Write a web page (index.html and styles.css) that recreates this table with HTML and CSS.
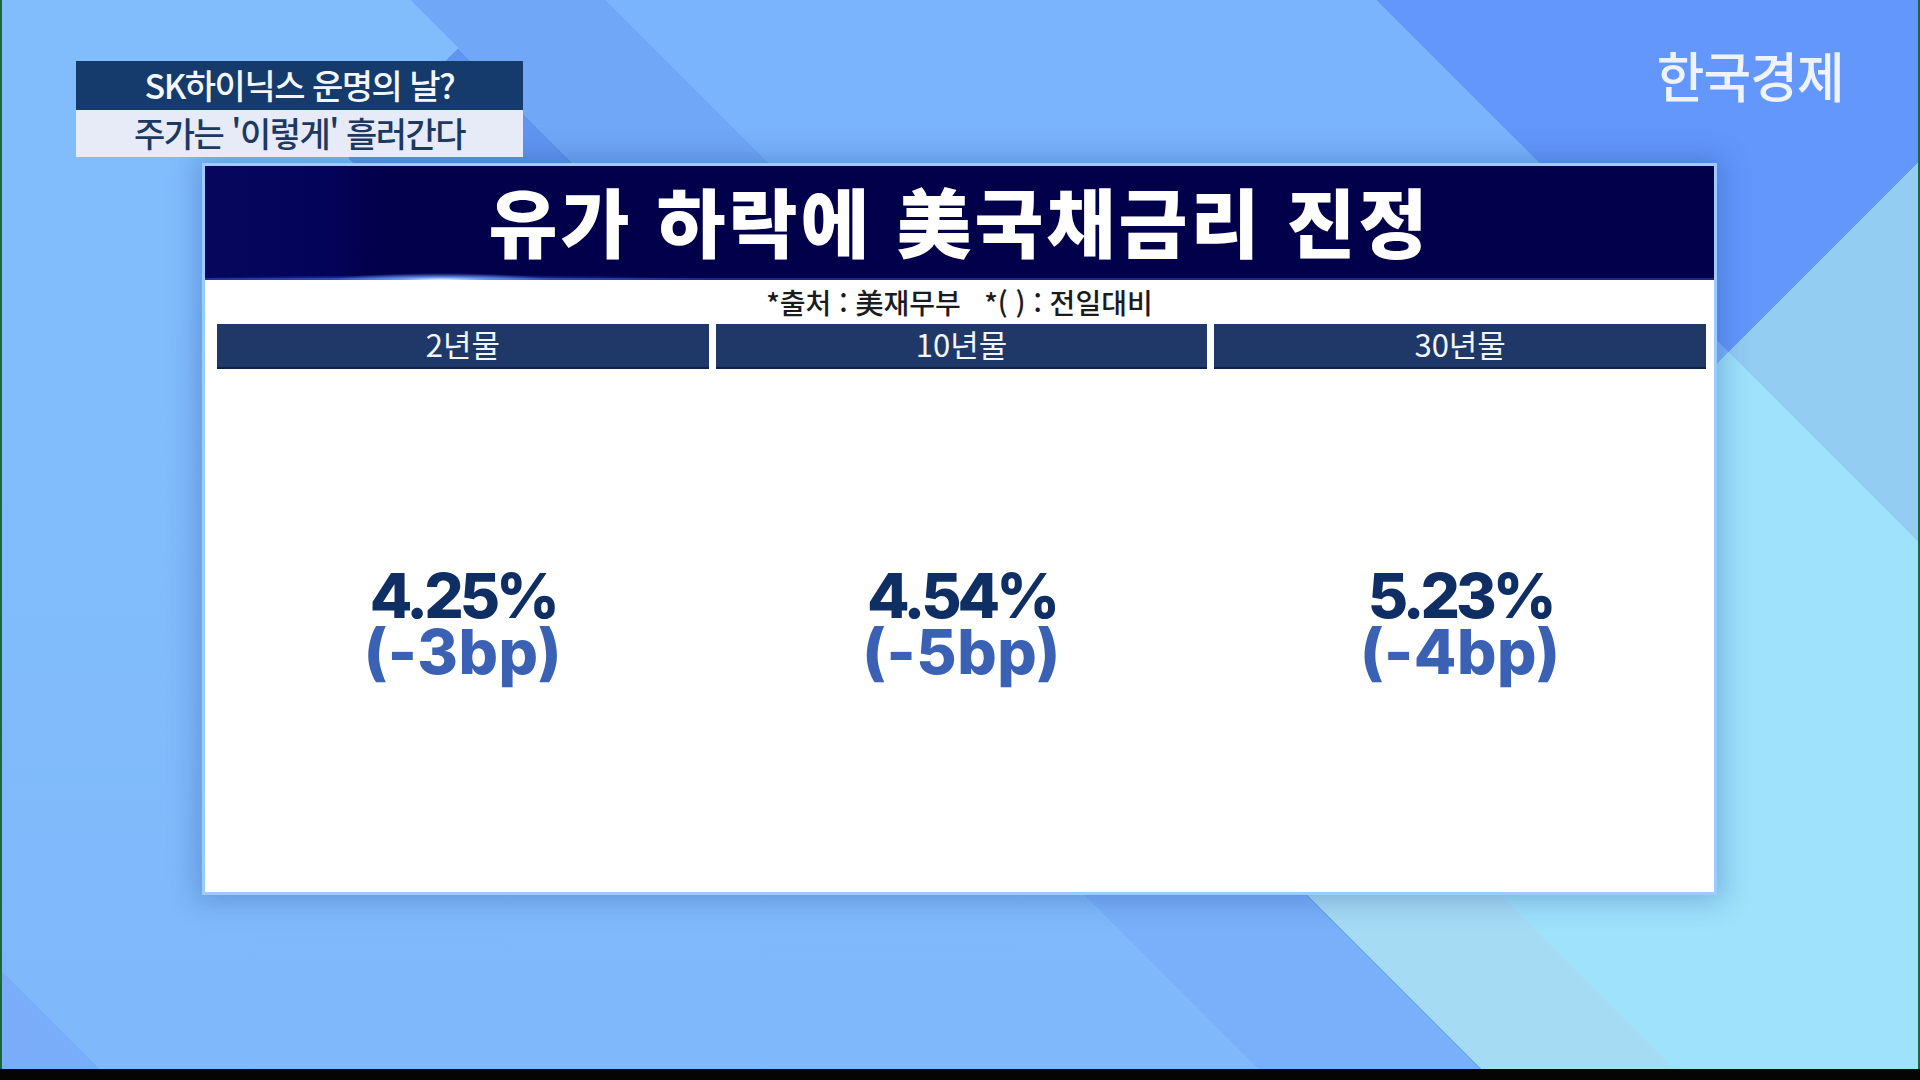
FILE: index.html
```html
<!DOCTYPE html>
<html lang="ko">
<head>
<meta charset="utf-8">
<title>유가 하락에 美국채금리 진정</title>
<link rel="stylesheet" href="styles.css">
</head>
<body>
<div class="stage">
  <div class="screen">
    <header class="top">
      <div class="caption">
        <div class="cap-line cap-dark">SK하이닉스 운명의 날?</div>
        <div class="cap-line cap-light">주가는 '이렇게' 흘러간다</div>
      </div>
      <div class="logo">한국경제</div>
    </header>
    <section class="panel">
      <h1 class="title">유가 하락에 美국채금리 진정</h1>
      <div class="source">*출처 : 美재무부   *( ) : 전일대비</div>
      <div class="cols">
        <div class="col">
          <div class="col-head">2년물</div>
          <div class="col-body">
            <div class="rate">4.25%</div>
            <div class="chg">(-3bp)</div>
          </div>
        </div>
        <div class="col">
          <div class="col-head">10년물</div>
          <div class="col-body">
            <div class="rate">4.54%</div>
            <div class="chg">(-5bp)</div>
          </div>
        </div>
        <div class="col">
          <div class="col-head">30년물</div>
          <div class="col-body">
            <div class="rate">5.23%</div>
            <div class="chg">(-4bp)</div>
          </div>
        </div>
      </div>
    </section>
  </div>
  <div class="bottom-bar"></div>
</div>
</body>
</html>
```
FILE: styles.css
```css
* { box-sizing: border-box; }

html, body {
  margin: 0;
  padding: 0;
}

body {
  width: 1920px;
  height: 1080px;
  overflow: hidden;
  font-family: "Noto Sans CJK KR", "Noto Sans", sans-serif;
}

.stage {
  width: 1920px;
  height: 1080px;
  display: flex;
  flex-direction: column;
  box-shadow: inset 2px 0 0 #1b6a36, inset -2px 0 0 #1b6a36;
  background-color: #80bcfc;
  background-image:
    linear-gradient(45deg, transparent 1056px, #a5dbf3 1056px 1192px, transparent 1192px),
    conic-gradient(from 0deg at 1728px 352px, transparent 0deg 45deg, #93cdf2 45deg 135deg, transparent 135deg),
    conic-gradient(from 0deg at 1246px 834px, transparent 0deg 45deg, #9ee2fb 45deg 135deg, transparent 135deg),
    linear-gradient(45deg, transparent 1737px, #6397fb 1737px),
    linear-gradient(45deg, transparent 1054px, #70a7f6 1054px 1192px, transparent 1192px),
    linear-gradient(45deg, #79adf9 78px, transparent 78px),
    linear-gradient(135deg, #81bdfd 358px, transparent 358px),
    linear-gradient(45deg, transparent 255px, #6095f1 255px 410px, transparent 410px),
    linear-gradient(45deg, transparent 898px, #79b0f9 898px 1054px, transparent 1054px),
    linear-gradient(45deg, transparent 1192px, #7ab4fc 1192px),
    linear-gradient(180deg, #82befd 0%, #7fb9fb 100%);
  background-size:
    100% 200px,
    100% 100%,
    100% 100%,
    100% 100%,
    100% 100%,
    100% 100%,
    100% 100%,
    100% 170px,
    100% 100%,
    100% 100%,
    100% 100%;
  background-position:
    left bottom,
    0 0, 0 0, 0 0, 0 0, 0 0, 0 0, 0 0, 0 0, 0 0, 0 0;
  background-repeat: no-repeat;
}

.screen {
  flex: 1;
  padding: 52px 76px 0 76px;
}

.bottom-bar {
  height: 11px;
  background: #050505;
}

/* top row */
.top {
  display: flex;
  justify-content: space-between;
  align-items: flex-start;
  height: 111px;
}

.caption {
  width: 447px;
  margin-top: 9px;
}

.cap-line {
  text-align: center;
  font-size: 34px;
  font-weight: 500;
  letter-spacing: -1.5px;
  white-space: nowrap;
}

.cap-dark {
  height: 49px;
  line-height: 47px;
  background: #143b6b;
  color: #f3f6fc;
}

.cap-light {
  height: 47px;
  line-height: 46px;
  background: #e7ebf7;
  color: #1c3961;
}

.logo {
  margin-top: -4px;
  font-size: 54px;
  line-height: 1;
  font-weight: 500;
  color: #eef3ff;
  letter-spacing: -1px;
  transform: scaleX(0.96);
  transform-origin: right center;
}

/* panel */
.panel {
  margin-left: 126px;
  width: 1515px;
  height: 732px;
  border: 3px solid #9ccbff;
  background: #ffffff;
  box-shadow: 0 0 26px 6px rgba(30, 70, 150, 0.3);
  display: flex;
  flex-direction: column;
}

.title {
  margin: 0;
  height: 114px;
  line-height: 108px;
  padding-bottom: 6px;
  text-align: center;
  font-size: 75px;
  font-weight: 900;
  letter-spacing: 3px;
  color: #ffffff;
  background:
    radial-gradient(ellipse 110px 7px at 236px 100%, rgba(235, 245, 255, 1), rgba(120, 170, 255, 0.75) 40%, transparent 100%),
    radial-gradient(ellipse 280px 5px at 236px 100%, rgba(70, 120, 255, 0.8), transparent 100%),
    linear-gradient(0deg, #1a2590 0 2px, transparent 2px),
    linear-gradient(90deg, #06075c 0, #04035a 120px, #02004b 170px, #02004b 100%);
}

.source {
  height: 44px;
  line-height: 44px;
  text-align: center;
  font-size: 28px;
  font-weight: 500;
  color: #1b1b1f;
  white-space: pre;
}

.cols {
  flex: 1;
  display: grid;
  grid-template-columns: repeat(3, 1fr);
  column-gap: 7px;
  padding: 0 8px 0 12px;
}

.col {
  display: flex;
  flex-direction: column;
}

.col-head {
  height: 45px;
  line-height: 39px;
  text-align: center;
  font-size: 31px;
  font-weight: 400;
  color: #f1f5fc;
  background: #1f3868;
  border-bottom: 2px solid #0f2146;
}

.col-body {
  flex: 1;
  display: flex;
  flex-direction: column;
  align-items: center;
  justify-content: center;
  padding-bottom: 14px;
  font-family: Inter, "Noto Sans", sans-serif;
  font-weight: 800;
  font-size: 62px;
  line-height: 56px;
}

.rate {
  color: #0f2e63;
  letter-spacing: -4px;
}

.chg {
  color: #3a61b3;
  letter-spacing: 0.5px;
}
```
